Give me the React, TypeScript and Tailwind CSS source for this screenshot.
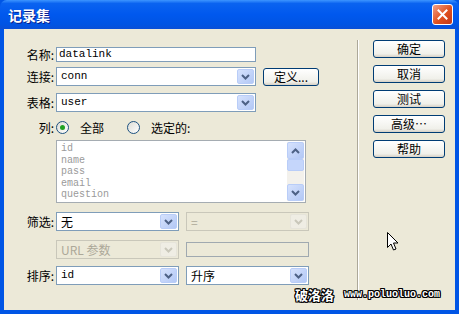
import React from "react";

const ui = { fontFamily: '"Noto Sans CJK SC", "Liberation Sans", sans-serif' };
const mono = { fontFamily: '"Liberation Mono", "Noto Sans CJK SC", monospace' };

const Chevron = ({ disabled }: { disabled?: boolean }) => (
  <svg width="9" height="6" viewBox="0 0 9 6">
    <path d="M1 1 L4.5 4.5 L8 1" fill="none" stroke={disabled ? "#c9c7ba" : "#4d6185"} strokeWidth="2" />
  </svg>
);

const Select = ({ value, w, disabled, monoText }: { value: string; w: string; disabled?: boolean; monoText?: boolean }) => (
  <div
    className={`${w} h-full flex items-stretch border ${disabled ? "border-[#c9c7ba] bg-[#ece9d8]" : "border-[#7f9db9] bg-white"} p-px`}
  >
    <div
      className={`flex-1 flex items-center pl-[3px] leading-none ${disabled ? "text-[#aca899]" : "text-black"} ${monoText ? "text-[11px]" : "text-[12px]"}`}
      style={monoText ? mono : ui}
    >
      {value}
    </div>
    <div
      className={`w-[17px] flex items-center justify-center rounded-[2px] border ${disabled ? "border-[#e6e4da] bg-[#efede4]" : "border-[#b9cdf8] bg-[linear-gradient(135deg,#d6e2fd,#b3c8f5)]"}`}
    >
      <Chevron disabled={disabled} />
    </div>
  </div>
);

const Label = ({ children }: { children: React.ReactNode }) => (
  <div className="w-[52px] shrink-0 text-right pr-[2px] text-[12px] leading-none text-black" style={ui}>
    {children}
  </div>
);

const Btn = ({ children, w }: { children: React.ReactNode; w: string }) => (
  <div
    className={`${w} h-[18px] flex items-center justify-center rounded-[3px] border border-[#003c74] bg-[linear-gradient(#ffffff,#f0f0ea_80%,#d6d0c5)] text-[12px] leading-none text-black`}
    style={ui}
  >
    {children}
  </div>
);

const Radio = ({ checked }: { checked?: boolean }) => (
  <div className="w-[13px] h-[13px] rounded-full border border-[#1c5180] bg-[linear-gradient(135deg,#dcdcd5,#ffffff)] flex items-center justify-center">
    {checked && <div className="w-[5px] h-[5px] rounded-full bg-[#21a121]" />}
  </div>
);

export default function App() {
  return (
    <div className="w-[459px] h-[314px] flex flex-col bg-[#0055e5] overflow-hidden" style={ui}>
      <div className="h-[29px] shrink-0 flex items-center justify-between pl-[8px] pr-[6px] rounded-t-[7px] bg-[linear-gradient(#3d95ff_0%,#0a63f0_12%,#0058ee_50%,#0054e3_85%,#0a4fd6_100%)]">
        <span className="text-white font-bold text-[14px] leading-none [text-shadow:1px_1px_0_#0a1e8c]">记录集</span>
        <div className="w-[21px] h-[21px] rounded-[3px] border border-white bg-[linear-gradient(135deg,#f0a08a,#e0501e_55%,#c2381a)] flex items-center justify-center">
          <svg width="11" height="11" viewBox="0 0 11 11">
            <path d="M1.5 1.5 L9.5 9.5 M9.5 1.5 L1.5 9.5" stroke="white" strokeWidth="2" strokeLinecap="square" />
          </svg>
        </div>
      </div>
      <div className="flex-1 mx-[4px] mb-[4px] bg-[#ece9d8] flex relative">
        <div className="w-[353px] pt-[18px] flex flex-col">
          <div className="h-[15px] flex items-center">
            <Label>名称:</Label>
            <div className="w-[200px] h-full border border-[#7f9db9] bg-white flex items-center pl-[2px] text-[11px] leading-none" style={mono}>
              datalink
            </div>
          </div>
          <div className="mt-[5px] h-[19px] flex items-center">
            <Label>连接:</Label>
            <Select value="conn" w="w-[200px]" monoText />
            <div className="ml-[7px]">
              <Btn w="w-[56px]">定义...</Btn>
            </div>
          </div>
          <div className="mt-[7px] h-[19px] flex items-center">
            <Label>表格:</Label>
            <Select value="user" w="w-[200px]" monoText />
          </div>
          <div className="mt-[9px] h-[13px] flex items-center">
            <Label>列:</Label>
            <Radio checked />
            <span className="ml-[11px] text-[12px] leading-none">全部</span>
            <div className="ml-[23px]">
              <Radio />
            </div>
            <span className="ml-[11px] text-[12px] leading-none">选定的:</span>
          </div>
          <div className="mt-[6px] h-[63px] flex">
            <div className="w-[52px] shrink-0" />
            <div className="w-[250px] border border-[#a5acb2] bg-white flex p-px">
              <div className="flex-1 pl-[3px] pt-[1px] text-[10px] leading-[11.5px] text-[#9a9a9a]" style={mono}>
                <div>id</div>
                <div>name</div>
                <div>pass</div>
                <div>email</div>
                <div>question</div>
              </div>
              <div className="w-[17px] flex flex-col bg-[#f3f1ec]">
                <div className="h-[17px] rounded-[2px] border border-[#b9cdf8] bg-[linear-gradient(135deg,#d6e2fd,#b3c8f5)] flex items-center justify-center">
                  <svg width="9" height="6" viewBox="0 0 9 6">
                    <path d="M1 5 L4.5 1.5 L8 5" fill="none" stroke="#4d6185" strokeWidth="2" />
                  </svg>
                </div>
                <div className="h-[12px] rounded-[2px] border border-[#b9cdf8] bg-[#c5d6fb]" />
                <div className="flex-1" />
                <div className="h-[17px] rounded-[2px] border border-[#b9cdf8] bg-[linear-gradient(135deg,#d6e2fd,#b3c8f5)] flex items-center justify-center">
                  <Chevron />
                </div>
              </div>
            </div>
          </div>
          <div className="mt-[9px] h-[19px] flex items-center">
            <Label>筛选:</Label>
            <Select value="无" w="w-[123px]" />
            <div className="ml-[7px] h-full">
              <Select value="=" w="w-[123px]" disabled />
            </div>
          </div>
          <div className="mt-[9px] h-[19px] flex items-center">
            <Label></Label>
            <Select value="URL 参数" w="w-[123px]" disabled />
            <div className="ml-[7px] w-[123px] h-[15px] border border-[#a0a9b0] bg-[#ece9d8]" />
          </div>
          <div className="mt-[7px] h-[19px] flex items-center">
            <Label>排序:</Label>
            <Select value="id" w="w-[123px]" monoText />
            <div className="ml-[7px] h-full">
              <Select value="升序" w="w-[123px]" />
            </div>
          </div>
        </div>
        <div className="mt-[11px] mb-[10px] w-px bg-[#aca899] border-r border-white box-content" />
        <div className="pt-[11px] pl-[14px] flex flex-col gap-[7px]">
          <Btn w="w-[72px]">确定</Btn>
          <Btn w="w-[72px]">取消</Btn>
          <Btn w="w-[72px]">测试</Btn>
          <Btn w="w-[72px]">高级…</Btn>
          <Btn w="w-[72px]">帮助</Btn>
        </div>
        <svg className="absolute left-[383px] top-[203px]" width="12" height="19" viewBox="0 0 12 19">
          <path d="M0.5 0.5 L0.5 15.5 L4 12 L6.5 18 L9 17 L6.5 11 L11 11 Z" fill="white" stroke="black" strokeWidth="1" />
        </svg>
        <div className="absolute left-[291px] top-[259px] whitespace-nowrap flex items-center gap-[10px] text-white font-bold leading-none [text-shadow:1px_0_0_#000,-1px_0_0_#000,0_1px_0_#000,0_-1px_0_#000,1px_1px_0_#000,-1px_-1px_0_#000,1px_-1px_0_#000,-1px_1px_0_#000]">
          <span className="text-[13px]">破洛洛</span>
          <span className="text-[10px]" style={mono}>www.poluoluo.com</span>
        </div>
      </div>
    </div>
  );
}
